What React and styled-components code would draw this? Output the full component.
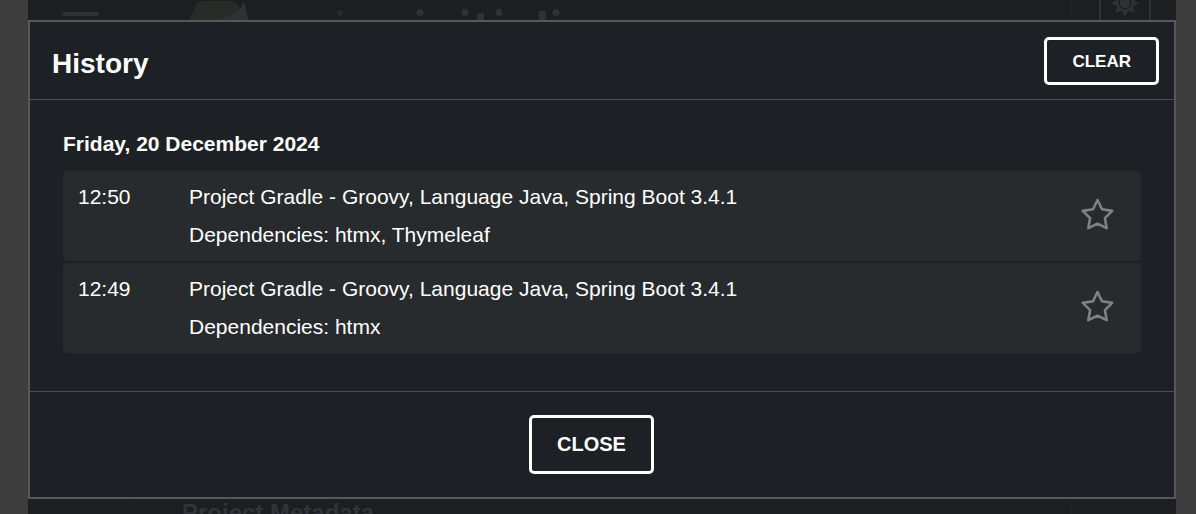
import React from "react";
import styled, { createGlobalStyle } from "styled-components";

const GlobalStyle = createGlobalStyle`
  *, *::before, *::after { box-sizing: border-box; }
  html, body, #root { min-height: 100%; }
  body {
    margin: 0;
    background: #3e3d3d;
    color: #fff;
    font-family: "Liberation Sans", Arial, sans-serif;
    font-size: 21px;
    line-height: 38px;
  }
  h1, h2, h3, p, ul { margin: 0; padding: 0; }
`;

const Backdrop = styled.div`
  position: fixed;
  inset: 0 20px 0 28px;
  display: grid;
  grid-template-columns: 106px 1fr 105px;
  overflow: hidden;
  background: #1b1f21;
`;

const SideColumn = styled.div`
  display: flex;
  justify-content: ${(p) => (p.$end ? "flex-end" : "flex-start")};
  align-items: flex-start;
  padding: ${(p) => (p.$end ? "0 25px" : "12px 34px")};
  border-${(p) => (p.$end ? "left" : "right")}: 1px solid #212527;
`;

const MenuBar = styled.span`
  width: 37px;
  height: 4px;
  border-radius: 2px;
  background: #2e3235;
`;

const ThemeBox = styled.span`
  display: flex;
  justify-content: center;
  width: 52px;
  height: 24px;
  border: solid #2e3235;
  border-width: 0 2px;
`;

const MainColumn = styled.div`
  display: flex;
  flex-direction: column;
  justify-content: space-between;
  height: 100vh;
  padding: 0 48px;
`;

const Logo = styled.svg`
  display: block;
  width: 440px;
  height: 24px;
`;

const ClippedTitle = styled.h3`
  height: 14px;
  color: #303438;
  font-size: 24px;
  line-height: 26px;
`;

const Dialog = styled.section`
  position: relative;
  margin: 20px 20px 16px 28px;
  border: 2px solid #54575b;
  background: #1d2024;
`;

const DialogHeader = styled.header`
  display: flex;
  align-items: center;
  justify-content: space-between;
  padding: 15px 15px 14px 22px;
  border-bottom: 1px solid #4b4e52;
`;

const DialogTitle = styled.h1`
  padding-top: 6px;
  font-size: 28px;
  line-height: 42px;
`;

const DialogBody = styled.div`
  padding: 26px 33px 38px;
`;

const DialogFooter = styled.footer`
  display: flex;
  justify-content: center;
  padding: 23px 44px 23px 23px;
  border-top: 1px solid #4b4e52;
`;

const OutlineButton = styled.button`
  padding: ${(p) => (p.$small ? "2px 25px 0" : "0 25px")};
  border: 3px solid #fff;
  border-radius: 5px;
  background: transparent;
  color: #fff;
  font-family: inherit;
  font-weight: bold;
  font-size: ${(p) => (p.$small ? "17px" : "20px")};
  line-height: ${(p) => (p.$small ? "40px" : "53px")};
  cursor: pointer;
`;

const DateTitle = styled.h2`
  font-size: 21px;
  line-height: 36px;
`;

const EntryList = styled.ul`
  display: flex;
  flex-direction: column;
  gap: 2px;
  margin-top: 9px;
  list-style: none;
`;

const Entry = styled.li`
  display: flex;
  align-items: center;
  padding: 7px 27px 7px 15px;
  border-radius: 4px;
  background: #272b2d;
`;

const EntryLink = styled.a`
  display: flex;
  flex: 1;
  color: #fff;
  text-decoration: none;
`;

const EntryTime = styled.time`
  width: 111px;
`;

const StarButton = styled.button`
  display: flex;
  padding: 0 0 4px;
  border: 0;
  background: transparent;
  color: #7f8283;
  cursor: pointer;
`;

const ENTRIES = [
  { time: "12:50", dependencies: "htmx, Thymeleaf" },
  { time: "12:49", dependencies: "htmx" },
];

function StarIcon() {
  return (
    <svg width="33" height="32" viewBox="0 0 33 32" aria-hidden="true">
      <path
        d="M16.5 2 L21 11.3 L31.2 12.9 L23.9 20.1 L25.7 30.2 L16.5 25.6 L7.3 30.2 L9.1 20.1 L1.8 12.9 L12 11.3 Z"
        fill="none"
        stroke="currentColor"
        strokeWidth="2.6"
        strokeLinejoin="round"
      />
    </svg>
  );
}

function SunIcon() {
  const rays = [0, 45, 90, 135, 180, 225, 270, 315];
  return (
    <svg width="28" height="18" viewBox="-14 -3 28 18" fill="#2e3235" aria-hidden="true">
      {rays.map((a) => (
        <path key={a} d="M-3.6 7 L0 14 L3.6 7 Z" transform={`rotate(${a})`} />
      ))}
      <circle r="8" />
      <circle r="5.8" fill="none" stroke="#1b1f21" strokeWidth="1.2" />
    </svg>
  );
}

export default function App() {
  return (
    <>
      <GlobalStyle />
      <Backdrop>
        <SideColumn>
          <MenuBar />
        </SideColumn>
        <MainColumn>
          <Logo viewBox="0 0 440 24" aria-hidden="true">
            <path d="M6 22 L14 5 Q17 1 21 1 H49 Q53 1 56 5 L64 22 Z" fill="#272c26" />
            <path d="M30 20 Q56 18 62 1 L67 22 H30 Z" fill="#2e3235" />
            <circle cx="158" cy="13" r="3" fill="#272c26" />
            <g fill="#2e3235">
              <circle cx="238" cy="12.500" r="3.500" />
              <circle cx="283" cy="12.500" r="3.500" />
              <circle cx="317" cy="12.500" r="3.500" />
              <circle cx="374" cy="12.500" r="3.500" />
              <rect x="295" y="13" width="7" height="11" />
              <rect x="357" y="11" width="7" height="13" />
            </g>
          </Logo>
          <ClippedTitle>Project Metadata</ClippedTitle>
        </MainColumn>
        <SideColumn $end>
          <ThemeBox>
            <SunIcon />
          </ThemeBox>
        </SideColumn>
      </Backdrop>
      <Dialog role="dialog" aria-labelledby="history-title">
        <DialogHeader>
          <DialogTitle id="history-title">History</DialogTitle>
          <OutlineButton type="button" $small>CLEAR</OutlineButton>
        </DialogHeader>
        <DialogBody>
          <DateTitle>Friday, 20 December 2024</DateTitle>
          <EntryList>
            {ENTRIES.map((entry) => (
              <Entry key={entry.time}>
                <EntryLink href="#">
                  <EntryTime>{entry.time}</EntryTime>
                  <div>
                    <p>Project Gradle - Groovy, Language Java, Spring Boot 3.4.1</p>
                    <p>Dependencies: {entry.dependencies}</p>
                  </div>
                </EntryLink>
                <StarButton type="button" aria-label="Add to favorites">
                  <StarIcon />
                </StarButton>
              </Entry>
            ))}
          </EntryList>
        </DialogBody>
        <DialogFooter>
          <OutlineButton type="button">CLOSE</OutlineButton>
        </DialogFooter>
      </Dialog>
    </>
  );
}
